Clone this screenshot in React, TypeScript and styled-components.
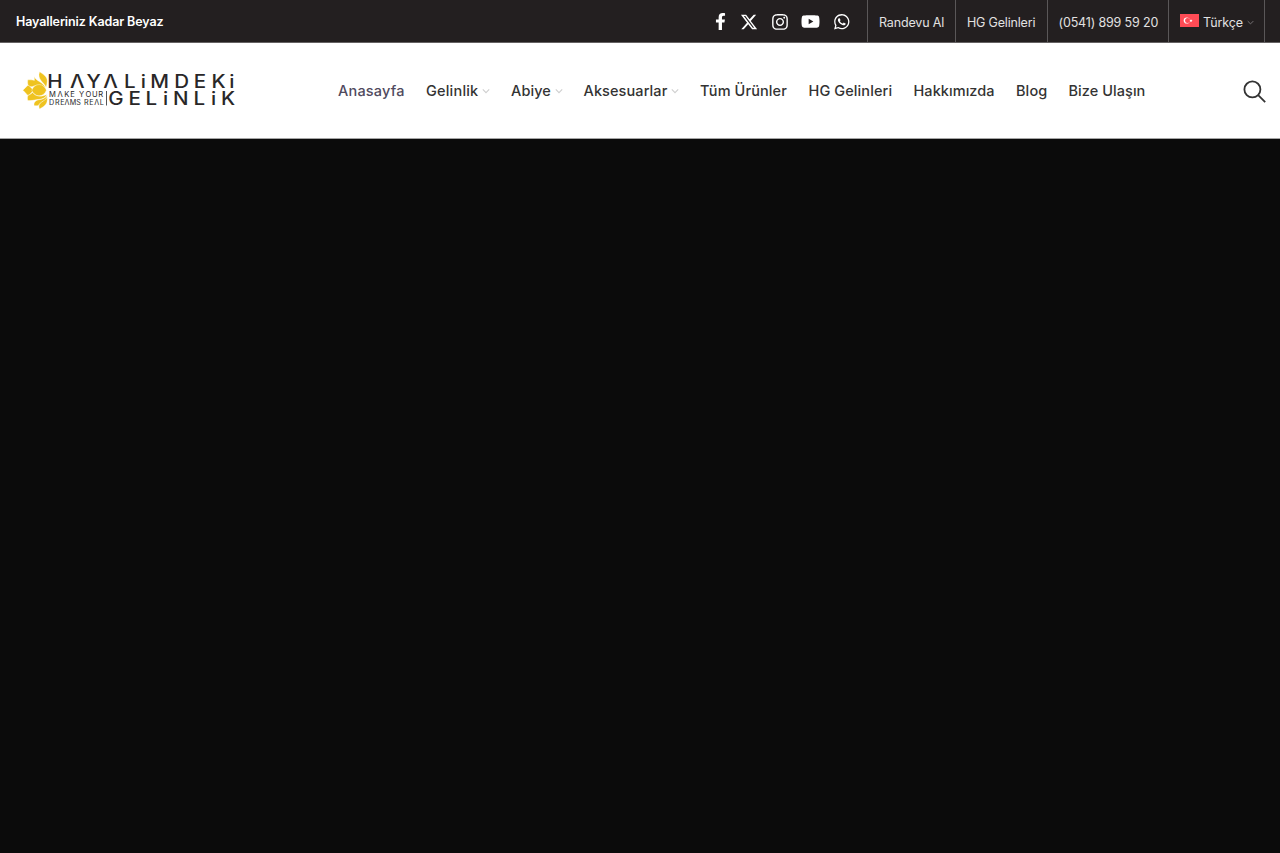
import React from "react";
import styled, { createGlobalStyle } from "styled-components";
import { FaFacebookF, FaInstagram, FaYoutube, FaWhatsapp } from "react-icons/fa";
import { FaXTwitter } from "react-icons/fa6";

const GlobalStyle = createGlobalStyle`
  *, *::before, *::after { box-sizing: border-box; }
  body { margin: 0; background: #0b0b0b; font-family: Inter, "Liberation Sans", sans-serif; }
  a { color: inherit; text-decoration: none; }
`;

const Page = styled.div`
  display: flex;
  flex-direction: column;
  height: 100vh;
  overflow: hidden;
`;

const TopBar = styled.div`
  display: flex;
  justify-content: space-between;
  flex: none;
  height: 43px;
  padding: 0 15px 0 16px;
  background: #231f20;
  border-bottom: 1px solid #656263;
  color: #fff;
`;

const Slogan = styled.strong<{ $track: number }>`
  padding-top: 1px;
  font-size: 12.5px;
  font-weight: 600;
  line-height: 42px;
  white-space: nowrap;
  letter-spacing: ${(p) => p.$track}px;
`;

const TopRight = styled.div`
  display: flex;
`;

const Socials = styled.div`
  display: flex;
  align-items: center;
  padding: 1px 9.5px 0 0;
`;

const SocialLink = styled.a<{ $width: number }>`
  display: flex;
  justify-content: center;
  width: ${(p) => p.$width}px;
`;

const TopLink = styled.a<{ $width: number; $track: number }>`
  display: flex;
  align-items: center;
  width: ${(p) => p.$width}px;
  padding: 2px 0 0 11px;
  border-left: 1px solid #5a5758;
  color: #e2e1e1;
  font-size: 12.5px;
  white-space: nowrap;
  letter-spacing: ${(p) => p.$track}px;
  &:last-child { border-right: 1px solid #5a5758; }
`;

const Flag = styled.svg`
  flex: none;
  margin: -4px 4px 0 0;
`;

const Header = styled.header`
  display: flex;
  align-items: center;
  flex: none;
  height: 96px;
  padding: 0 14px 0 16px;
  background: #fff;
  border-bottom: 1px solid #a5a5a5;
`;

const LogoLink = styled.a`
  display: flex;
  width: 322px;
  margin-bottom: 1px;
`;

const Nav = styled.nav`
  display: flex;
  flex: 1;
`;

const NavItem = styled.a<{ $width: number; $active?: boolean }>`
  display: flex;
  align-items: center;
  flex: none;
  width: ${(p) => p.$width}px;
  color: ${(p) => (p.$active ? "#504a5e" : "#333")};
  font-size: 14.5px;
  font-weight: 500;
  line-height: 20px;
  white-space: nowrap;
`;

const NavLabel = styled.span<{ $track: number }>`
  letter-spacing: ${(p) => p.$track}px;
`;

const SearchButton = styled.button`
  display: flex;
  padding: 1px 0 0;
  border: 0;
  background: none;
`;

const Hero = styled.main`
  flex: 1;
  background: #0b0b0b;
`;

const ArrowIcon = styled.svg<{ $gap: number }>`
  flex: none;
  margin-left: ${(p) => p.$gap}px;
`;

const Arrow = ({ color, gap, size = 8 }: { color: string; gap: number; size?: number }) => (
  <ArrowIcon $gap={gap} width={size} height={size} viewBox="0 0 8 8" fill="none" stroke={color} strokeWidth="1.1">
    <path d="M0.8 2.4 4 5.6 7.2 2.4" />
  </ArrowIcon>
);

const STRETCH = 1.14;
const stretched = (centers: number[]) => centers.map((c) => (c / STRETCH).toFixed(2)).join(" ");

const Logo = () => (
  <svg width="230" height="50" viewBox="16 65 230 50" role="img" aria-label="Hayalimdeki Gelinlik">
    <g fill="#efc31f" stroke="#fff" strokeWidth=".35">
      <path d="M39.6 71.8C43.6 74.6 47.6 77 47.2 81.4 47.1 83.6 46.6 85.6 46 87.6 44.8 82.4 36.6 79.8 39.6 71.8Z" />
      <path d="M34.4 76.4C35.6 81.2 43.6 82 45.6 88 42.4 84.6 38 84.6 34.6 85.8 31.8 87 30.2 87 28.2 85.4 27.4 83.6 27.6 81.4 27.8 79.8 30 79.8 32.4 79.8 34.4 80.4Z" />
      <path d="M22.8 90.2C25 88.6 26 86.6 28 85.2 30.2 86.6 31.8 88 33 90.2 31.8 92.6 30.2 94.2 28 95.4 26 93.8 25 91.8 22.8 90.2Z" />
      <path d="M31.8 90.2C33.6 86 36.4 84.6 39.4 84.6 42.8 84.8 45 87 46.4 90.2 45 93.6 42.8 95.6 39.4 95.8 36.4 95.8 33.6 94.4 31.8 90.2Z" />
      <path d="M28 95.4C30.2 94.6 31.6 93.4 32.6 92.4 35.4 96.4 40.4 97.4 47 94.4 45.4 98.4 40.6 99.4 37 99.6 33.6 100.4 30.6 100.6 27.8 100.6 27.4 98.8 27.2 97 28 95.4Z" />
      <path d="M34 105.4C33.6 100.8 37.4 99.8 41 99.4 43.6 98.8 45.6 97.6 47.2 95.4 47.4 101.2 40.4 101 38.4 105.4 37 105.8 35.6 105.8 34 105.4Z" />
      <path d="M39.6 108.9C36.8 102 45 101.8 47.2 97.2 48 103.4 45.2 106 39.6 108.9Z" />
    </g>
    <g fill="#292728" fontFamily="Inter, sans-serif" textAnchor="middle">
      <g transform={`scale(${STRETCH} 1)`} fontSize="18" fontWeight="500">
        <text y="88.2" x={stretched([54.8, 77.2, 93.6, 110.6, 129.8, 143.3, 159.7, 181.8, 200, 218.6, 231.8])}>HΛYΛLiMDEKi</text>
        <text y="104.8" x={stretched([115.8, 134.6, 151.4, 165.6, 180.8, 199.4, 213.6, 228])}>GELiNLiK</text>
      </g>
      <text y="96.8" fontSize="7.6" x="52.4 60 66.8 72.6 78 81.6 88.4 94.8 100.8">MΛKE YOUR</text>
      <text y="104.6" fontSize="7.2" x="51.6 57.2 62.3 67 73 78.6 81.6 86.4 91.5 96.8 101.7">DREΛMS REΛL</text>
    </g>
    <path d="M106.5 91V105.5" stroke="#555" />
  </svg>
);

const socials = [
  { icon: <FaFacebookF size={17} />, width: 26 },
  { icon: <FaXTwitter size={18} />, width: 31 },
  { icon: <FaInstagram size={18} />, width: 30 },
  { icon: <FaYoutube size={19} />, width: 32 },
  { icon: <FaWhatsapp size={17.5} />, width: 31 },
];

const navItems = [
  { label: "Anasayfa", width: 88, track: 0.2, active: true },
  { label: "Gelinlik", width: 85, track: 0.2, arrow: true },
  { label: "Abiye", width: 72.5, track: 0.1, arrow: true },
  { label: "Aksesuarlar", width: 116.5, track: 0.1, arrow: true },
  { label: "Tüm Ürünler", width: 108.5, track: 0.1 },
  { label: "HG Gelinleri", width: 105, track: 0.1 },
  { label: "Hakkımızda", width: 102.5, track: 0.06 },
  { label: "Blog", width: 52.5, track: 0.1 },
  { label: "Bize Ulaşın", width: 80, track: 0.06 },
];

export default function App() {
  return (
    <Page>
      <GlobalStyle />
      <TopBar>
        <Slogan $track={-0.11}>Hayalleriniz Kadar Beyaz</Slogan>
        <TopRight>
          <Socials>
            {socials.map((s, i) => (
              <SocialLink key={i} href="#" $width={s.width}>{s.icon}</SocialLink>
            ))}
          </Socials>
          <TopLink href="#" $width={88} $track={-0.16}>Randevu Al</TopLink>
          <TopLink href="#" $width={91.5} $track={-0.18}>HG Gelinleri</TopLink>
          <TopLink href="#" $width={121.5} $track={-0.16}>(0541) 899 59 20</TopLink>
          <TopLink href="#" $width={97} $track={-0.16}>
            <Flag width="19" height="13" viewBox="0 0 19 13">
              <rect width="19" height="13" fill="#ff4b55" />
              <circle cx="6.8" cy="6.5" r="3.1" fill="#fff" />
              <circle cx="7.6" cy="6.5" r="2.5" fill="#ff4b55" />
              <path d="m9.5 6.5 1-.4.5-.9.5.9 1 .2-.8.7.2 1-.9-.5-.9.4.1-1z" fill="#fff" />
            </Flag>
            Türkçe
            <Arrow color="#7a7778" gap={4} size={7} />
          </TopLink>
        </TopRight>
      </TopBar>
      <Header>
        <LogoLink href="#"><Logo /></LogoLink>
        <Nav>
          {navItems.map((n) => (
            <NavItem key={n.label} href="#" $width={n.width} $active={n.active}>
              <NavLabel $track={n.track}>{n.label}</NavLabel>
              {n.arrow && <Arrow color="#cfcfcf" gap={4} />}
            </NavItem>
          ))}
        </Nav>
        <SearchButton aria-label="Ara">
          <svg width="23" height="23" viewBox="0 0 23 23" fill="none" stroke="#333" strokeWidth="1.8">
            <circle cx="9.4" cy="9.4" r="8" />
            <path d="m15.2 15.2 7 7" />
          </svg>
        </SearchButton>
      </Header>
      <Hero />
    </Page>
  );
}
